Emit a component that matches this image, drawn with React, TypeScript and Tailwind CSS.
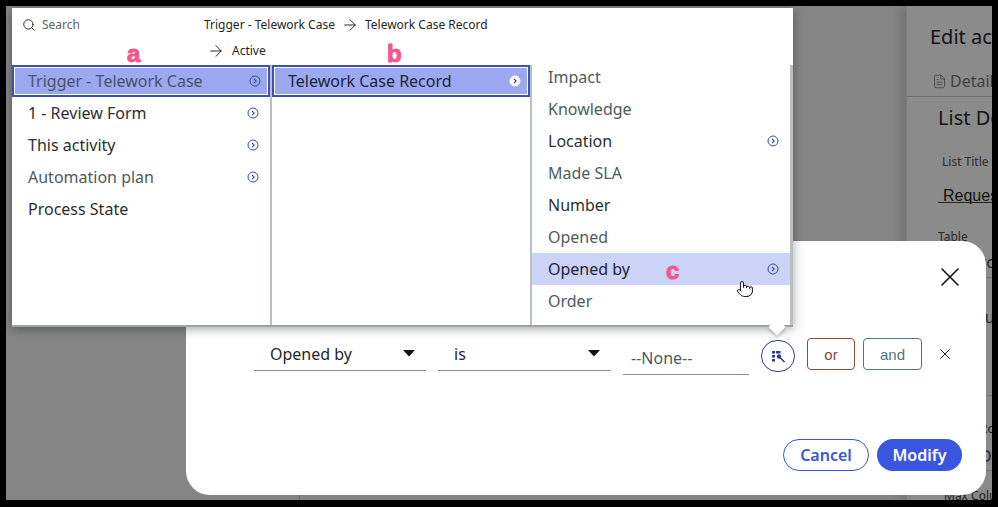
import React from "react";
import { Search, ArrowRight, X, FileText, Pointer } from "lucide-react";

const font = { fontFamily: '"Noto Sans", "Open Sans", sans-serif' };
const arial = { fontFamily: '"Liberation Sans", sans-serif' };
const pink = "absolute text-[24px] font-black leading-[30px] text-[#f2578f] [-webkit-text-stroke:1px_#f2578f]";

function Chev({ filled = false }: { filled?: boolean }) {
  return (
    <svg width="12" height="12" viewBox="0 0 12 12" className="shrink-0">
      <circle cx="6" cy="6" r="5" fill={filled ? "#ffffff" : "none"} stroke={filled ? "#ffffff" : "#3b4a9f"} strokeWidth="1" />
      <path d="M5 3.8 L7.2 6 L5 8.2" fill="none" stroke={filled ? "#2a3a8f" : "#3b4a9f"} strokeWidth="1.1" />
    </svg>
  );
}

function Row({ label, arrow, selected, hover, muted, filled }: { label: string; arrow?: boolean; selected?: boolean; hover?: boolean; muted?: boolean; filled?: boolean }) {
  const base = "h-8 flex items-center justify-between pl-4 pr-[11px] text-base leading-none whitespace-nowrap";
  if (selected) {
    return (
      <div className="h-8 border-2 border-[#3f51b5] bg-[#9ba9f0]">
        <div className={"h-full flex items-center justify-between pl-[12px] pr-[6px] border border-white text-base leading-none whitespace-nowrap " + (muted ? "text-[#4a5368]" : "text-[#1d2538]")}>
          <span className="ml-px">{label}</span>
          {arrow && <Chev filled={filled} />}
        </div>
      </div>
    );
  }
  return (
    <div className={base + (hover ? " bg-[#cbd3f6] text-[#1d2538]" : muted ? " text-[#4f5a5c]" : " text-[#2a3031]")}>
      <span>{label}</span>
      {arrow && <Chev />}
    </div>
  );
}

function Select({ label, width }: { label: string; width: string }) {
  return (
    <div className={"mt-px h-[32px] pb-[2px] flex items-center justify-between pl-4 pr-[11px] border-b border-[#8a8f90] text-base text-[#1f2526] " + width}>
      <span>{label}</span>
      <svg width="12" height="7" viewBox="0 0 12 7"><path d="M0 0 H12 L6 6.5 Z" fill="#111" /></svg>
    </div>
  );
}

export default function App() {
  return (
    <div className="relative w-[998px] h-[507px] bg-black overflow-hidden" style={font}>
      <div className="ml-[6px] mt-[6px] w-[986px] h-[494px] bg-[#858585] overflow-hidden flex justify-between relative">
        <div className="self-end ml-[293px] h-[5px] w-px bg-[#666]" />
        {/* background panel */}
        <div className="w-[86px] h-full shrink-0 bg-[#8b8b8b] border-l border-[#7c7c7c] shadow-[-6px_0_8px_rgba(0,0,0,0.12)] overflow-hidden whitespace-nowrap">
          <div className="w-[300px]">
            <div className="pl-[23px] pt-[17px] h-[55px] text-xl leading-[27px] text-[#141414]">Edit activity</div>
            <div className="pl-[25px] pt-2 h-[36px] flex items-start gap-[3px] text-base leading-[24px] text-[#3f3f3f] border-b border-[#6e6e6e]">
              <FileText size={15} strokeWidth={1.3} className="mt-[5px]" />
              <span>Details</span>
            </div>
            <div className="pl-[31px] pt-[7px] h-[50px] text-xl leading-[27px] text-[#141414]">List Details</div>
            <div className="pl-[35px] pt-[5px] h-[29px] text-xs leading-[20px] text-[#2c2c2c]">List Title</div>
            <div className="mt-[2px] ml-[31px] h-[25px] border-b border-[#222] pl-[5px] text-base leading-[36px] text-[#111]" style={arial}>Request</div>
            <div className="pl-[31px] pt-[26px] text-xs leading-[16px] text-[#2c2c2c]">Table</div>
            <div className="mt-[6px] ml-[31px] h-[27px] pl-[6px] border-b border-[#6e6e6e] text-base leading-[22px] text-[#222]">Telework</div>
            <div className="pt-[28px] h-[118px] ml-[31px] pl-[18px] border-b border-[#6e6e6e] text-base leading-[22px] text-[#222]">Request</div>
            <div className="pt-[22px] ml-[31px] pl-[42px] text-xs leading-[22px] text-[#222]">Rows</div>
            <div className="mt-[5px] ml-[31px] h-[26px] pl-[42px] border-b border-[#6e6e6e] text-base leading-[22px] text-[#222]">Do</div>
            <div className="mt-[14px] pl-[37px] text-xs leading-[22px] text-[#222]">Max Columns</div>
          </div>
        </div>

        {/* modal */}
        <div className="absolute left-[180px] top-[235px] w-[800px] h-[254px] bg-white rounded-[24px] z-10">
          <div className="flex justify-end pt-[20px] pr-[20px] h-[97px]">
            <X size={32} strokeWidth={1.2} className="text-[#111]" />
          </div>
          <div className="flex items-start pl-[68px]">
            <Select label="Opened by" width="w-[172px]" />
            <div className="ml-3"><Select label="is" width="w-[173px]" /></div>
            <div className="ml-3 mt-[7px] w-[126px] h-[30px] pl-[8px] border-b border-[#8a8f90] text-base leading-[26px] text-[#4f5a5c]">--None--</div>
            <div className="ml-3 w-[34px] h-[32px] mt-[2px] rounded-full border border-[#2c3a8c] flex items-center justify-center">
              <svg width="15" height="13" viewBox="0 0 15 13">
                <path d="M1 1h3v2.4H1zM5 1h4.5v2.4H5zM1 5h3v2.4H1zM1 9h3v2.4H1z" fill="#2c3a8c" />
                <circle cx="8" cy="6.5" r="2.2" fill="#2c3a8c" />
                <path d="M8.5 7 L13.5 12" stroke="#2c3a8c" strokeWidth="1.6" />
              </svg>
            </div>
            <button className="ml-3 w-[48px] h-[32px] rounded-[4px] border border-[#8a4a3e] text-[15px] leading-none text-[#8a4a3e]" style={arial}>or</button>
            <button className="ml-2 w-[59px] h-[32px] rounded-[4px] border border-[#4f7482] text-[15px] leading-none text-[#4f7482]" style={arial}>and</button>
            <X size={18} strokeWidth={1.3} className="ml-[14px] mt-[7px] text-[#222]" />
          </div>
          <div className="absolute right-6 bottom-6 flex gap-2">
            <button className="w-[86px] h-[32px] rounded-full border border-[#3a55d9] bg-white text-base font-semibold leading-none text-[#3a55d9]">Cancel</button>
            <button className="w-[85px] h-[32px] rounded-full bg-[#3a55e0] text-base font-semibold leading-none text-white">Modify</button>
          </div>
        </div>

        {/* popover */}
        <div className="absolute left-[6px] top-[2px] w-[781px] h-[319px] bg-white border-b-2 border-[#9aa5a5] shadow-[0_2px_10px_rgba(0,0,0,0.35)] z-20">
          <div className="h-[57px] relative">
            <div className="flex items-center h-[34px] pl-[10px] gap-[6px] text-xs text-[#5b6465]">
              <Search size={14} strokeWidth={1.6} className="text-[#222]" />
              <span>Search</span>
              <div className="ml-[118px] flex items-center text-xs text-[#1f2526] whitespace-nowrap">
                <span>Trigger - Telework Case</span>
                <ArrowRight size={18} strokeWidth={1.3} className="mx-[6px]" />
                <span>Telework Case Record</span>
              </div>
            </div>
            <div className="flex items-center h-[18px] pl-[195px] text-xs text-[#1f2526]">
              <ArrowRight size={18} strokeWidth={1.3} className="mr-[7px]" />
              <span>Active</span>
            </div>
          </div>
          <div className="flex h-[260px] border-r-[3px] border-[#b9c1c1]">
            <div className="w-[258px] overflow-hidden">
              <Row label="Trigger - Telework Case" arrow selected muted />
              <Row label="1 - Review Form" arrow />
              <Row label="This activity" arrow />
              <Row label="Automation plan" arrow muted />
              <Row label="Process State" />
            </div>
            <div className="w-[2px] bg-[#b9c1c1]" />
            <div className="w-[258px]">
              <Row label="Telework Case Record" arrow selected filled />
            </div>
            <div className="w-[2px] bg-[#b9c1c1]" />
            <div className="w-[258px] -mt-[4px] overflow-hidden">
              <Row label="Impact" muted />
              <Row label="Knowledge" muted />
              <Row label="Location" arrow />
              <Row label="Made SLA" muted />
              <Row label="Number" />
              <Row label="Opened" muted />
              <Row label="Opened by" arrow hover />
              <Row label="Order" muted />
            </div>
          </div>
          {/* arrow */}
          <div className="absolute left-[759px] top-[313px] w-[12px] h-[12px] rotate-45 bg-white shadow-[2px_2px_3px_rgba(0,0,0,0.2)]" />
          {/* labels */}
          <span className={pink + " left-[115px] top-[31px]"} style={arial}>a</span>
          <span className={pink + " left-[375px] top-[31px]"} style={arial}>b</span>
          <span className={pink + " left-[654px] top-[248px]"} style={arial}>c</span>
          <Pointer size={18} strokeWidth={1.3} className="absolute left-[724px] top-[272px] text-[#111] fill-white" />
        </div>
      </div>
    </div>
  );
}
